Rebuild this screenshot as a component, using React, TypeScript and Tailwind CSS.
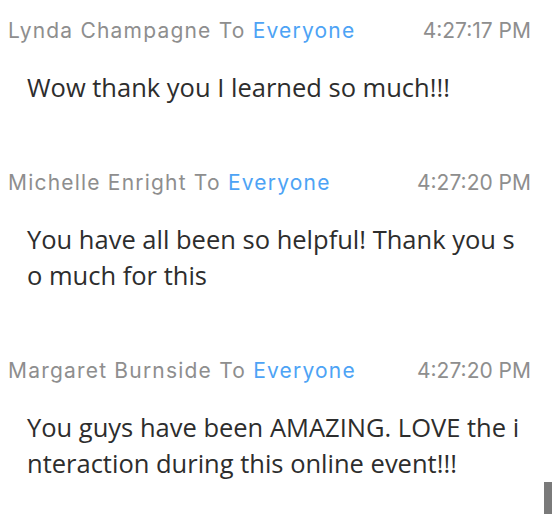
const messages = [
  { from: "Lynda Champagne", time: "4:27:17 PM", text: "Wow thank you I learned so much!!!" },
  { from: "Michelle Enright", time: "4:27:20 PM", text: "You have all been so helpful! Thank you so much for this" },
  { from: "Margaret Burnside", time: "4:27:20 PM", text: "You guys have been AMAZING. LOVE the interaction during this online event!!!" },
];

export default function App() {
  return (
    <div className="relative w-[552px] h-[514px] overflow-hidden bg-white">
      <div className="flex flex-col pt-[19px]">
        {messages.map((m, i) => (
          <div key={i} className="flex flex-col pb-[66px]">
            <div className="flex justify-between items-center h-6 pl-2 pr-[21px] text-[21px] leading-6 text-[#8e8e8e] font-['Inter',sans-serif]">
              <div className="tracking-[1.2px]">
                {m.from} To <span className="text-[#4da3f5]">Everyone</span>
              </div>
              <div>{m.time}</div>
            </div>
            <div className="mt-[26px] pl-[27px] pr-[24px] text-[25.5px] leading-9 text-[#2d2d2d] break-all font-['Open_Sans',sans-serif]">
              {m.text}
            </div>
          </div>
        ))}
      </div>
      <div className="absolute right-0 top-[482px] w-2 h-8 bg-[#7a7a7a]" />
    </div>
  );
}
